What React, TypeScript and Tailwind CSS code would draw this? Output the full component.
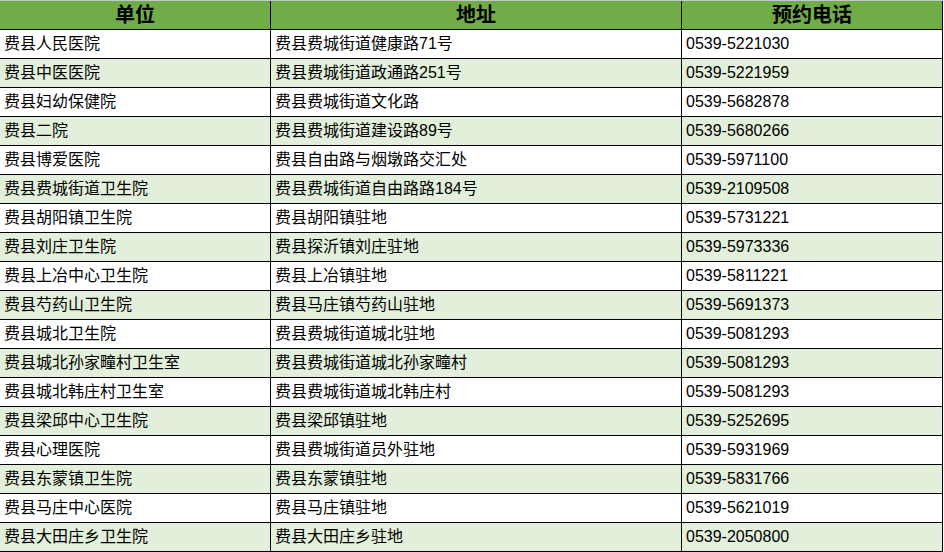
const rows: [string, string, string][] = [
  ['费县人民医院', '费县费城街道健康路71号', '0539-5221030'],
  ['费县中医医院', '费县费城街道政通路251号', '0539-5221959'],
  ['费县妇幼保健院', '费县费城街道文化路', '0539-5682878'],
  ['费县二院', '费县费城街道建设路89号', '0539-5680266'],
  ['费县博爱医院', '费县自由路与烟墩路交汇处', '0539-5971100'],
  ['费县费城街道卫生院', '费县费城街道自由路路184号', '0539-2109508'],
  ['费县胡阳镇卫生院', '费县胡阳镇驻地', '0539-5731221'],
  ['费县刘庄卫生院', '费县探沂镇刘庄驻地', '0539-5973336'],
  ['费县上冶中心卫生院', '费县上冶镇驻地', '0539-5811221'],
  ['费县芍药山卫生院', '费县马庄镇芍药山驻地', '0539-5691373'],
  ['费县城北卫生院', '费县费城街道城北驻地', '0539-5081293'],
  ['费县城北孙家疃村卫生室', '费县费城街道城北孙家疃村', '0539-5081293'],
  ['费县城北韩庄村卫生室', '费县费城街道城北韩庄村', '0539-5081293'],
  ['费县梁邱中心卫生院', '费县梁邱镇驻地', '0539-5252695'],
  ['费县心理医院', '费县费城街道员外驻地', '0539-5931969'],
  ['费县东蒙镇卫生院', '费县东蒙镇驻地', '0539-5831766'],
  ['费县马庄中心医院', '费县马庄镇驻地', '0539-5621019'],
  ['费县大田庄乡卫生院', '费县大田庄乡驻地', '0539-2050800'],
];

const font = { fontFamily: '"Liberation Sans", "Noto Sans CJK SC", sans-serif' };

export default function App() {
  return (
    <div className="w-[944px] h-[552px] bg-white overflow-hidden text-black" style={font}>
      <div className="h-px w-[943px] bg-[#c3c7d1]" />
      {/* header */}
      <div className="flex h-[29px] w-[943px] border-b border-black bg-[#70ad47] text-[20px] font-bold">
        <div className="w-[271px] border-r border-black flex items-center justify-center">单位</div>
        <div className="w-[411px] border-r border-black flex items-center justify-center">地址</div>
        <div className="w-[261px] border-r border-black flex items-center justify-center">预约电话</div>
      </div>
      {rows.map(([name, addr, phone], i) => (
        <div
          key={i}
          className={`flex h-[29px] w-[943px] border-b border-black text-[16px] ${i % 2 === 1 ? 'bg-[#e2efda]' : 'bg-white'}`}
        >
          <div className="w-[271px] border-r border-black flex items-center pl-1 whitespace-nowrap">{name}</div>
          <div className="w-[411px] border-r border-black flex items-center pl-1 whitespace-nowrap">{addr}</div>
          <div className="w-[261px] border-r border-black flex items-center pl-1 whitespace-nowrap">{phone}</div>
        </div>
      ))}
    </div>
  );
}
